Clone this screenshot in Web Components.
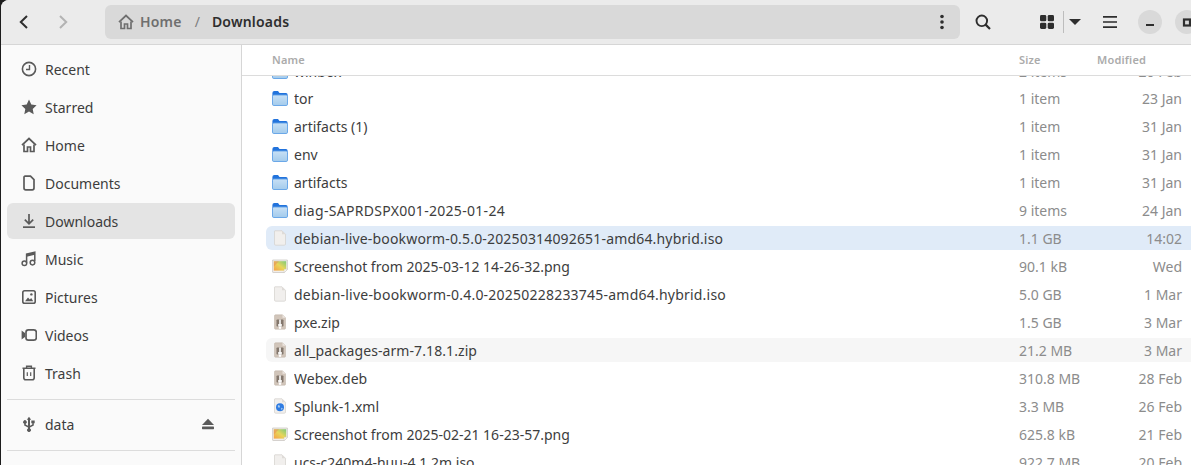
<!DOCTYPE html>
<html>
<head>
<meta charset="utf-8">
<title>Downloads</title>
<style>
    html, body { margin: 0; height: 100%; overflow: hidden; background: #1c1c1c; }
    body { font-family: "Noto Sans", "Open Sans", sans-serif; }
</style>
</head>
<body>
<files-window>
    <header-bar slot="header"></header-bar>
    <places-sidebar slot="sidebar">
        <place-item icon="recent">Recent</place-item>
        <place-item icon="star">Starred</place-item>
        <place-item icon="home">Home</place-item>
        <place-item icon="doc">Documents</place-item>
        <place-item icon="download" active>Downloads</place-item>
        <place-item icon="music">Music</place-item>
        <place-item icon="picture">Pictures</place-item>
        <place-item icon="video">Videos</place-item>
        <place-item icon="trash">Trash</place-item>
        <place-rule></place-rule>
        <place-item icon="usb" eject>data</place-item>
        <place-rule></place-rule>
    </places-sidebar>
    <file-list slot="list">
        <file-row type="folder" size="2 items" date="20 Feb" style="margin-top:1px;margin-bottom:-1px">winbox</file-row>
        <file-row type="folder" size="1 item" date="23 Jan">tor</file-row>
        <file-row type="folder" size="1 item" date="31 Jan">artifacts (1)</file-row>
        <file-row type="folder" size="1 item" date="31 Jan">env</file-row>
        <file-row type="folder" size="1 item" date="31 Jan">artifacts</file-row>
        <file-row type="folder" size="9 items" date="24 Jan" style="--name-spacing:.3px">diag-SAPRDSPX001-2025-01-24</file-row>
        <file-row type="file" size="1.1 GB" date="14:02" state="selected" style="--name-spacing:.17px">debian-live-bookworm-0.5.0-20250314092651-amd64.hybrid.iso</file-row>
        <file-row type="image" size="90.1 kB" date="Wed">Screenshot from 2025-03-12 14-26-32.png</file-row>
        <file-row type="file" size="5.0 GB" date="1 Mar" style="--name-spacing:.22px">debian-live-bookworm-0.4.0-20250228233745-amd64.hybrid.iso</file-row>
        <file-row type="zip" size="1.5 GB" date="3 Mar">pxe.zip</file-row>
        <file-row type="zip" size="21.2 MB" date="3 Mar" state="hover" style="--name-spacing:.08px">all_packages-arm-7.18.1.zip</file-row>
        <file-row type="zip" size="310.8 MB" date="28 Feb">Webex.deb</file-row>
        <file-row type="xml" size="3.3 MB" date="26 Feb">Splunk-1.xml</file-row>
        <file-row type="image" size="625.8 kB" date="21 Feb">Screenshot from 2025-02-21 16-23-57.png</file-row>
        <file-row type="file" size="922.7 MB" date="20 Feb">ucs-c240m4-huu-4.1.2m.iso</file-row>
    </file-list>
</files-window>

<script>
const symbolic = {
    recent: '<circle cx="8" cy="8" r="6.600" fill="none" stroke="currentColor" stroke-width="1.600"/><path d="M8.500 4V8.500H5" fill="none" stroke="currentColor" stroke-width="1.400"/>',
    star: '<path d="M8 .6l2.300 4.900 5.300.7-3.900 3.700 1 5.300L8 12.600l-4.700 2.600 1-5.300L.4 6.200l5.300-.7z" fill="currentColor"/>',
    home: '<path d="M1 8.200L8 1.600l7 6.600" fill="none" stroke="currentColor" stroke-width="1.800"/><path d="M3 7.500V14.500H6.500V10h3v4.500H13V7.500" fill="none" stroke="currentColor" stroke-width="1.700"/>',
    doc: '<path d="M4 1.200H9.500L13 4.700V13a1.800 1.800 0 0 1-1.800 1.800H4.800A1.800 1.800 0 0 1 3 13V2.200A1 1 0 0 1 4 1.200z" fill="none" stroke="currentColor" stroke-width="1.700"/>',
    download: '<path d="M8 1V10.500M3.800 6.600L8 10.800l4.200-4.200" fill="none" stroke="currentColor" stroke-width="1.700"/><rect x="2" y="13.300" width="12" height="1.700" fill="currentColor"/>',
    music: '<path d="M5.600 11.800V3.200L13.800 1.200V10" fill="none" stroke="currentColor" stroke-width="1.500"/><path d="M5.600 3.200L13.800 1.200V3.800L5.600 5.800z" fill="currentColor"/><circle cx="3.400" cy="12.300" r="2.300" fill="none" stroke="currentColor" stroke-width="1.500"/><circle cx="11.500" cy="11.600" r="2.300" fill="none" stroke="currentColor" stroke-width="1.500"/>',
    picture: '<rect x="1.800" y="1.800" width="12.400" height="12.400" rx="1.800" fill="none" stroke="currentColor" stroke-width="1.600"/><path d="M4 12.300L7 8.400l1.800 2 1.400-1.300 2 3.200z" fill="currentColor"/><circle cx="10.400" cy="5.400" r="1.200" fill="currentColor"/>',
    video: '<rect x="5" y="2.800" width="10.300" height="10.400" rx="2.400" fill="none" stroke="currentColor" stroke-width="1.700"/><path d="M.6 3.500L4 6v4L.6 12.500z" fill="currentColor"/>',
    trash: '<path d="M1.500 3.300H14.500M5.600 3V1.300H10.400V3" fill="none" stroke="currentColor" stroke-width="1.400"/><path d="M2.800 3.300V12.800A2 2 0 0 0 4.800 14.800H11.200A2 2 0 0 0 13.200 12.800V3.300" fill="none" stroke="currentColor" stroke-width="1.600"/><path d="M6.300 7.300V11M9.700 7.300V11" fill="none" stroke="currentColor" stroke-width="1.200"/>',
    usb: '<path d="M8 .8L10.200 3.800H9V9.700L11.300 8.500V7.300H10.300V4.500H13.700V7.300H12.800V9.400L9 11.400V12.400A1.900 1.900 0 1 1 7 12.400V11.400L3.200 9.400V7.700A1.800 1.800 0 1 1 4.700 7.700V8.500L7 9.700V3.800H5.800z" fill="currentColor"/>',
    eject: '<path d="M8 2.800L14 9H2z" fill="currentColor"/><rect x="2" y="10.600" width="12" height="2.600" rx=".6" fill="currentColor"/>'
};

class FilesWindow extends HTMLElement {
    constructor() {
        super();
        this.attachShadow({mode: 'open'}).innerHTML = `
            <style>
                :host { display: flex; flex-direction: column; height: 100vh; margin-left: 1px; background: #fafafa; border-top-left-radius: 8px; overflow: hidden; }
                .body { flex: 1; min-height: 0; display: flex; }
            </style>
            <slot name="header"></slot>
            <div class="body"><slot name="sidebar"></slot><slot name="list"></slot></div>`;
    }
}

class HeaderBar extends HTMLElement {
    constructor() {
        super();
        this.attachShadow({mode: 'open'}).innerHTML = `
            <style>
                :host { display: flex; align-items: center; height: 45px; box-sizing: border-box; padding: 0 0 1px 0; background: #ebebeb; border-bottom: 1px solid #d6d6d6; color: #2e2e2e; flex: none; overflow: hidden; }
                svg { display: block; flex: none; }
                .nav { display: flex; align-items: center; flex: none; width: 104px; padding-left: 15px; box-sizing: border-box; gap: 23px; }
                .path { flex: none; width: 855px; height: 34px; box-sizing: border-box; display: flex; align-items: center; padding: 0 10px 0 13px; background: #d9d9d9; border-radius: 6px; font-size: 14px; font-weight: 600; }
                .crumb { color: #6f6f6f; margin-left: 6px; letter-spacing: .2px; }
                .slash { color: #7d7d7d; font-weight: 400; margin: 0 12px 0 13px; }
                .here { color: #2e2e2e; letter-spacing: .2px; }
                .fill { flex: 1; }
                .tools { display: flex; align-items: center; flex: none; }
                .circle { width: 24px; height: 24px; border-radius: 50%; background: #d9d9d9; display: flex; align-items: center; justify-content: center; flex: none; }
            </style>
            <div class="nav">
                <svg width="16" height="16" viewBox="0 0 16 16"><path d="M11 2L4.800 8 11 14" fill="none" stroke="#2e2e2e" stroke-width="2"/></svg>
                <svg width="16" height="16" viewBox="0 0 16 16"><path d="M5 2l6.200 6L5 14" fill="none" stroke="#b3b3b3" stroke-width="2"/></svg>
            </div>
            <div class="path">
                <svg width="16" height="16" viewBox="0 0 16 16" style="color:#6f6f6f">${symbolic.home}</svg>
                <span class="crumb">Home</span><span class="slash">/</span><span class="here">Downloads</span>
                <span class="fill"></span>
                <svg width="16" height="16" viewBox="0 0 16 16"><circle cx="8" cy="2.500" r="1.800" fill="#2e2e2e"/><circle cx="8" cy="8" r="1.800" fill="#2e2e2e"/><circle cx="8" cy="13.500" r="1.800" fill="#2e2e2e"/></svg>
            </div>
            <div class="tools">
                <svg style="margin-left:15px" width="16" height="16" viewBox="0 0 16 16"><circle cx="6.800" cy="6.800" r="5.300" fill="none" stroke="#2e2e2e" stroke-width="1.900"/><path d="M10.600 10.600L15 15" stroke="#2e2e2e" stroke-width="2.200"/></svg>
                <svg style="margin-left:48px" width="16" height="16" viewBox="0 0 16 16"><rect x="1" y="1" width="6.300" height="6.300" rx="1.400" fill="#2e2e2e"/><rect x="8.700" y="1" width="6.300" height="6.300" rx="1.400" fill="#2e2e2e"/><rect x="1" y="8.700" width="6.300" height="6.300" rx="1.400" fill="#2e2e2e"/><rect x="8.700" y="8.700" width="6.300" height="6.300" rx="1.400" fill="#2e2e2e"/></svg>
                <span style="width:1px;height:22px;background:#bdbdbd;margin:0 5px 0 8px"></span>
                <svg width="12" height="8" viewBox="0 0 12 8"><path d="M0 1h12L6 7z" fill="#2e2e2e"/></svg>
                <svg style="margin-left:21px" width="16" height="16" viewBox="0 0 16 16"><path d="M1 2.800h14M1 8h14M1 13.200h14" stroke="#2e2e2e" stroke-width="1.700"/></svg>
                <span class="circle" style="margin-left:20px"><svg width="16" height="16" viewBox="0 0 16 16"><rect x="4" y="10" width="8" height="2" fill="#2e2e2e"/></svg></span>
                <span class="circle" style="margin-left:13px"><svg width="16" height="16" viewBox="0 0 16 16"><rect x="5" y="5.500" width="6" height="6" fill="none" stroke="#2e2e2e" stroke-width="2.200"/></svg></span>
            </div>`;
    }
}

class PlacesSidebar extends HTMLElement {
    constructor() {
        super();
        this.attachShadow({mode: 'open'}).innerHTML = `
            <style>
                :host { display: flex; flex-direction: column; flex: none; width: 241px; box-sizing: border-box; padding: 6px 6px 0 6px; gap: 2px; background: #fafafa; border-right: 1px solid #d6d6d6; }
            </style>
            <slot></slot>`;
    }
}

class PlaceItem extends HTMLElement {
    constructor() {
        super();
        const icon = this.getAttribute('icon');
        const eject = this.hasAttribute('eject')
            ? `<svg class="eject" width="16" height="16" viewBox="0 0 16 16">${symbolic.eject}</svg>` : '';
        this.attachShadow({mode: 'open'}).innerHTML = `
            <style>
                :host { display: flex; align-items: center; height: 36px; flex: none; box-sizing: border-box; padding: 0 19px 0 14px; gap: 8px; border-radius: 6px; font-size: 14px; color: #3d3d3d; }
                :host([active]) { background: #e4e4e4; }
                svg { display: block; flex: none; color: #5a5a5a; }
                .label { flex: 1; }
            </style>
            <svg width="16" height="16" viewBox="0 0 16 16">${symbolic[icon]}</svg>
            <span class="label"><slot></slot></span>${eject}`;
    }
}

class PlaceRule extends HTMLElement {
    constructor() {
        super();
        this.attachShadow({mode: 'open'}).innerHTML = `
            <style>:host { display: block; height: 1px; background: #dcdcdc; flex: none; margin: 6px 0 4px; }</style>`;
    }
}

class FileList extends HTMLElement {
    constructor() {
        super();
        this.attachShadow({mode: 'open'}).innerHTML = `
            <style>
                :host { display: flex; flex-direction: column; flex: 1; min-width: 0; background: #fff; }
                .head { flex: none; height: 31px; box-sizing: border-box; display: grid; grid-template-columns: 1fr 78px 94px; align-items: center; padding: 0 0 2px 30px; border-bottom: 1px solid #dcdcdc; font-size: 11px; font-weight: 600; letter-spacing: .2px; color: #ababab; }
                .rows { flex: 1; min-height: 0; overflow: hidden; padding-left: 24px; }
                .inner { display: flex; flex-direction: column; gap: 4px; margin-top: -18px; }
            </style>
            <div class="head"><span>Name</span><span>Size</span><span>Modified</span></div>
            <div class="rows"><div class="inner"><slot></slot></div></div>`;
    }
}

const pageShape = 'M3 .8H10L13.500 4.300V14A1.200 1.200 0 0 1 12.300 15.200H3.700A1.200 1.200 0 0 1 2.500 14V1.300A.5.5 0 0 1 3 .8z';

const fileIcons = {
    folder: `<defs><linearGradient id="f" x1="0" y1="0" x2="0" y2="1"><stop offset="0" stop-color="#c8e0f5"/><stop offset="1" stop-color="#a3cbec"/></linearGradient></defs>
        <path d="M.4 3A2 2 0 0 1 2.400 1H6l1.500 2H14a1.800 1.800 0 0 1 1.600 1.800V8H.4z" fill="#2273dc"/>
        <rect x=".5" y="5" width="15" height="10.500" rx="1.300" fill="url(#f)" stroke="#5fa0e6" stroke-width=".9"/>`,
    file: `<path d="${pageShape}" fill="#f1efed" stroke="#d3d0cc" stroke-width=".7"/><path d="M10 .8V4.300H13.500z" fill="#dedbd8"/>`,
    zip: `<path d="M2.500 1.800A1 1 0 0 1 3.500 .8H10.500L13.500 3.800V14.200A1 1 0 0 1 12.500 15.200H3.500A1 1 0 0 1 2.500 14.200z" fill="#d1c5ba" stroke="#bdb0a5" stroke-width=".5"/><path d="M10.500 .8V3.800H13.500z" fill="#ece5df"/><rect x="4.500" y="5.500" width="7" height="7" rx=".8" fill="#83776d"/><path d="M7.200 5.500h1.600V10h1v2.500H6.200V10h1z" fill="#fbfaf9"/><rect x="6.800" y="12.500" width="2.400" height="2.300" fill="#fff"/>`,
    image: `<defs><linearGradient id="i" x1="0" y1="1" x2="1" y2="0"><stop offset="0" stop-color="#f5a046"/><stop offset=".5" stop-color="#e8d65a"/><stop offset="1" stop-color="#7cc97a"/></linearGradient></defs>
        <path d="M.6 2H15.400V11.500L12.300 14.500H1.100A.5.5 0 0 1 .6 14z" fill="#f1eeea" stroke="#bdb9b4" stroke-width=".6"/><rect x="1.800" y="3.200" width="12.400" height="9.400" fill="url(#i)"/><path d="M1.800 3.200H7L1.800 8.500z" fill="#e55f5a" opacity=".35"/><path d="M12.200 14.500L15.400 11.200H12.200z" fill="#fff" stroke="#c9c5c0" stroke-width=".4"/>`,
    xml: `<path d="${pageShape}" fill="#f1efed" stroke="#d3d0cc" stroke-width=".7"/><path d="M10 .8V4.300H13.500z" fill="#dedbd8"/><circle cx="8" cy="9.300" r="4" fill="#2f7ce2"/><path d="M6 7l2 .8-.4 2-1.800-.6zM9 9.800l1.800.5-1.200 2.200z" fill="#a8ccf2"/>`
};

class FileRow extends HTMLElement {
    constructor() {
        super();
        const type = this.getAttribute('type');
        this.attachShadow({mode: 'open'}).innerHTML = `
            <style>
                :host { display: grid; grid-template-columns: 16px 1fr 78px 79px; align-items: center; height: 24px; flex: none; padding: 0 9px 0 6px; column-gap: 6px; border-radius: 6px 0 0 6px; font-size: 14px; color: #3d3d3d; }
                :host([state=selected]) { background: #e0ebf8; }
                :host([state=hover]) { background: #f6f6f6; }
                svg { display: block; }
                .name { white-space: nowrap; overflow: hidden; letter-spacing: var(--name-spacing, 0); }
                .size, .date { color: #8c8c8c; white-space: nowrap; }
                .date { text-align: right; }
            </style>
            <svg width="16" height="16" viewBox="0 0 16 16">${fileIcons[type]}</svg>
            <span class="name"><slot></slot></span>
            <span class="size">${this.getAttribute('size')}</span>
            <span class="date">${this.getAttribute('date')}</span>`;
    }
}

customElements.define('files-window', FilesWindow);
customElements.define('header-bar', HeaderBar);
customElements.define('places-sidebar', PlacesSidebar);
customElements.define('place-item', PlaceItem);
customElements.define('place-rule', PlaceRule);
customElements.define('file-list', FileList);
customElements.define('file-row', FileRow);
</script>
</body>
</html>
